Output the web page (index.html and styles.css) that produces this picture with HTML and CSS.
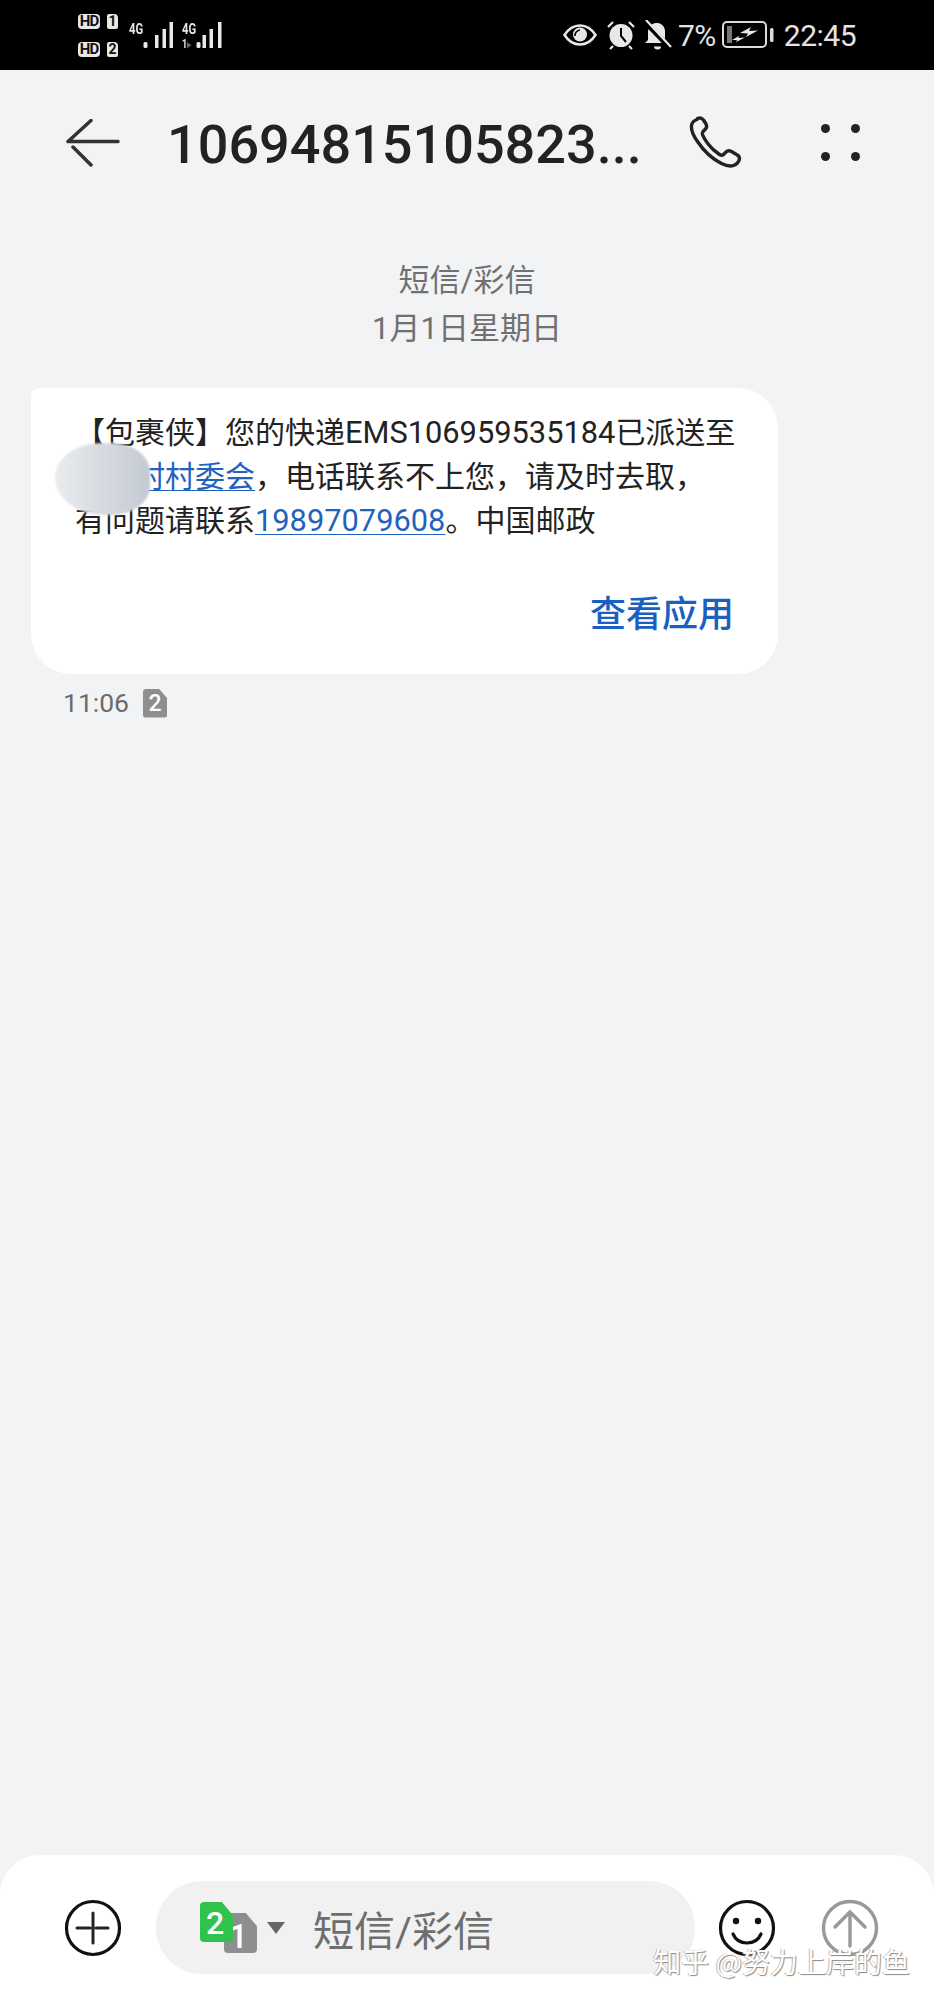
FILE: index.html
```html
<!DOCTYPE html>
<html lang="zh-CN">
<head>
<meta charset="utf-8">
<title>短信</title>
<link rel="stylesheet" href="styles.css">
</head>
<body>
<div class="phone">
  <header class="status">
    <div class="status-left">
      <div class="sims">
        <div class="sim-row"><span class="hd">HD</span><span class="sim-chip">1</span></div>
        <div class="sim-row"><span class="hd">HD</span><span class="sim-chip">2</span></div>
      </div>
      <div class="net">
        <span class="net-label">4G</span>
        <svg class="bars" width="30" height="26" viewBox="0 0 30 26"><g fill="#e8e8e8"><rect x="0.5" y="20" width="4" height="6" rx="1.500"/><rect x="12" y="13" width="3.500" height="13"/><rect x="19.500" y="7" width="3.500" height="19"/><rect x="26.500" y="0" width="3.500" height="26"/></g></svg>
      </div>
      <div class="net">
        <span class="net-label">4G<small class="net-sub">1<i class="net-arrow">▸</i></small></span>
        <svg class="bars" width="30" height="26" viewBox="0 0 30 26"><g fill="#e8e8e8"><rect x="0.5" y="20" width="4" height="6" rx="1.500"/><rect x="6.500" y="13" width="3.500" height="13"/><rect x="13.500" y="7" width="3.500" height="19"/><rect x="22" y="0" width="3.500" height="26"/></g></svg>
      </div>
    </div>
    <div class="status-right">
      <svg class="eye" width="34" height="24" viewBox="0 0 34 24"><path d="M1.500 12C6 5 11 2.500 17 2.500S28 5 32.500 12C28 19 23 21.500 17 21.500S6 19 1.500 12Z" fill="none" stroke="#e8e8e8" stroke-width="2.600"/><circle cx="17" cy="11.500" r="7" fill="#e8e8e8"/><path d="M12 13a5.500 5.500 0 0 1 5-6" fill="none" stroke="#000" stroke-width="1.600"/></svg>
      <svg class="alarm" width="30" height="30" viewBox="0 0 30 30"><circle cx="15" cy="15.500" r="11.500" fill="#e8e8e8"/><path d="M15 8v8l5 6" fill="none" stroke="#000" stroke-width="2"/><path d="M2 7l5-5M28 7l-5-5M7 26l-3 3M23 26l3 3" stroke="#e8e8e8" stroke-width="2.200"/></svg>
      <svg class="bell" width="28" height="30" viewBox="0 0 28 30"><path d="M1 23l3-3V12c0-5 4-9 8-9h2c5 1 7 5 7 8v12z" fill="#e8e8e8"/><path d="M0 1l26 27" stroke="#000" stroke-width="5"/><path d="M2 0l25 27" stroke="#e8e8e8" stroke-width="2.200"/><path d="M10 26.500h7a3.500 3 0 0 1-7 0z" fill="#e8e8e8"/></svg>
      <span class="pct">7%</span>
      <svg class="battery" width="52" height="28" viewBox="0 0 52 28"><rect x="1" y="1" width="43" height="25" rx="4" fill="none" stroke="#dcdcdc" stroke-width="2"/><rect x="5" y="5" width="5" height="17" fill="#777"/><path d="M18 12L29 6L27 10L36 9.500L24 16L26 12.500Z" fill="#e8e8e8"/><path d="M10 19L17 15L16.500 17L23 16.500L14 21L15 19Z" fill="#e8e8e8"/><rect x="48" y="7" width="3.500" height="14" rx="1.500" fill="#dcdcdc"/></svg>
      <span class="clock">22:45</span>
    </div>
  </header>

  <nav class="topbar">
    <svg class="back" width="54" height="48" viewBox="0 0 54 48"><path d="M2 22.500H52M25 1.500L2 22.500M25 46L7 28" fill="none" stroke="#333" stroke-width="3.500" stroke-linecap="round"/></svg>
    <h1 class="title">10694815105823...</h1>
    <svg class="call" width="54" height="54" viewBox="0 0 54 54"><path d="M8 3.500c-3 1-5 3-5.500 6-.5 4 1 9 6 16 6 9 14 17 24 22 5 2.500 9 3 12 2 3-1 6-4 6-7 0-2-1-3-3-4l-5-3c-2-1-4-1-5.500.5l-2.500 2.500c-1 1-2.500 1-4 0-3-2-8-6-11-10-3-4-5-7-6-10-.4-1.500 0-2.500 1-3.500l2-2c1.500-1.500 1.500-3 .5-5l-2.500-4c-1.500-2-4-2.500-6-1.500z" fill="none" stroke="#222" stroke-width="3.400" stroke-linejoin="round"/></svg>
    <div class="dots"><i></i><i></i><i></i><i></i></div>
  </nav>

  <main class="thread">
    <div class="date-head">
      <div>短信/彩信</div>
      <div>1月1日星期日</div>
    </div>
    <article class="bubble">
      <p class="msg">【包裹侠】您的快递<span class="latin">EMS106959535184</span>已派送至<br><span class="indent"></span><a>村村委会</a>，电话联系不上您，请及时去取，<br>有问题请联系<a class="latin">19897079608</a>。中国邮政</p>
      <div class="action">查看应用</div>
      <span class="smudge"></span>
    </article>
    <div class="meta">
      <span>11:06</span>
      <span class="chip chip-small">2</span>
    </div>
  </main>

  <footer class="composer">
    <svg class="ico" width="58" height="58" viewBox="0 0 58 58"><circle cx="29" cy="29" r="26.500" fill="none" stroke="#111" stroke-width="3.200"/><path d="M13 29H26M32 29H44M29 14V44" stroke="#222" stroke-width="3" stroke-linecap="round"/></svg>
    <div class="field">
      <div class="sim-pick">
        <span class="chip chip-gray">1</span>
        <span class="chip chip-green">2</span>
      </div>
      <svg class="caret" width="20" height="14" viewBox="0 0 20 14"><path d="M1 1h18L10 13z" fill="#666"/></svg>
      <span class="placeholder">短信/彩信</span>
    </div>
    <svg class="ico smile" width="58" height="58" viewBox="0 0 58 58"><circle cx="29" cy="29" r="26.500" fill="none" stroke="#111" stroke-width="3.200"/><circle cx="18" cy="22" r="3.200" fill="#111"/><circle cx="40" cy="22" r="3.200" fill="#111"/><path d="M15 35c3 7 9 9 14 9s11-2 14-9" fill="none" stroke="#111" stroke-width="3.200" stroke-linecap="round"/></svg>
    <svg class="ico send" width="58" height="58" viewBox="0 0 58 58"><circle cx="29" cy="29" r="26.500" fill="none" stroke="#999" stroke-width="3.400"/><path d="M29 47V13M14 28L29 13L44 28" fill="none" stroke="#999" stroke-width="3.400" stroke-linecap="round"/></svg>
  </footer>
  <div class="watermark">知乎 @努力上岸的鱼</div>
</div>
</body>
</html>
```
FILE: styles.css
```css
* { box-sizing: border-box; }
html, body { margin: 0; padding: 0; }
body { font-family: "Roboto", "Noto Sans CJK SC", sans-serif; background: #f1f3f5; }
.phone { position: relative; width: 934px; height: 2000px; display: flex; flex-direction: column; overflow: hidden; background: #f1f3f5; }

.status { flex: none; height: 70px; background: #000; color: #e8e8e8; display: flex; justify-content: space-between; align-items: center; padding: 0 78px; }
.status-left { display: flex; align-items: center; gap: 9px; }
.sims { display: flex; flex-direction: column; gap: 13px; margin-right: 2px; }
.sim-row { display: flex; gap: 7px; }
.hd { width: 22px; height: 15px; background: #e8e8e8; color: #111; border-radius: 4px; font: 700 15px/15px "Roboto", sans-serif; letter-spacing: -1px; text-align: center; }
.sim-chip { width: 11px; height: 15px; background: #e8e8e8; color: #111; border-radius: 2px 4px 2px 2px; font: 700 14px/15px "Roboto", sans-serif; text-align: center; }
.net { display: flex; height: 26px; }
.net-label { display: block; width: 14px; font: 700 15px/14px "Roboto", sans-serif; transform: scaleX(.75); transform-origin: left top; white-space: nowrap; }
.net-sub { display: block; margin-top: 3px; font-size: 12px; line-height: 10px; }
.net-arrow { font-style: normal; color: #666; font-size: 11px; }
.bars { display: block; }

.status-right { display: flex; align-items: center; }
.alarm { margin-left: 9px; }
.bell { margin-left: 8px; }
.pct { margin-left: 6px; font-size: 30px; letter-spacing: -.5px; color: #e4e4e4; }
.battery { margin-left: 6px; }
.clock { margin-left: 10px; font-size: 30px; letter-spacing: -.5px; color: #e4e4e4; }

.topbar { flex: none; height: 146px; display: flex; align-items: center; padding: 0 74px 0 66px; }
.back { flex: none; }
.title { flex: 1; margin: 4px 0 0 47px; font-size: 54px; font-weight: 500; color: #222; line-height: 1; white-space: nowrap; }
.call { flex: none; }
.dots { flex: none; width: 39px; height: 37px; margin: -2px 0 0 78px; display: grid; grid-template-columns: 9px 9px; justify-content: space-between; align-content: space-between; }
.dots i { width: 9px; height: 9px; background: #222; border-radius: 50%; }

.thread { flex: 1; padding: 0 31px; }
.date-head { margin-top: 41px; text-align: center; font-size: 31px; line-height: 48px; color: #707070; }
.bubble { position: relative; width: 747px; height: 286px; margin-top: 35px; padding: 23px 44px 0; background: #fff; border-radius: 8px 40px 40px 40px; }
.msg { margin: 0; font-size: 30px; line-height: 44px; color: #222; white-space: nowrap; }
.msg .latin { font-size: 30.800px; }
.msg a { color: #1f63bd; text-decoration: underline; text-underline-offset: 3px; text-decoration-thickness: 1px; }
.indent { display: inline-block; width: 60px; }
.action { margin-top: 48px; text-align: right; font-size: 36px; line-height: 48px; color: #1a5fc2; font-weight: 500; }
.smudge { position: absolute; left: 24px; top: 55px; width: 95px; height: 72px; border-radius: 48% 40% 40% 52%; background: linear-gradient(90deg, #e9ecef, #c4cad3); filter: blur(1px); }

.meta { display: flex; align-items: center; gap: 14px; margin-top: 12px; padding-left: 32px; font-size: 26.500px; line-height: 34px; color: #6b6b6b; }
.chip { display: inline-block; color: #fff; text-align: center; clip-path: polygon(0 0, 66% 0, 100% 33%, 100% 100%, 0 100%); }
.chip-small { width: 24px; height: 29px; background: #8e8e8e; border-radius: 3px; font-size: 23px; line-height: 29px; font-weight: 500; }

.composer { flex: none; height: 145px; display: flex; align-items: center; padding: 26px 0; padding-left: 64px; background: #fff; border-radius: 40px 40px 0 0; }
.ico { flex: none; }
.field { flex: none; width: 539px; height: 93px; margin-left: 34px; padding-left: 44px; border-radius: 46px; background: #f1f1f1; display: flex; align-items: center; }
.sim-pick { position: relative; width: 57px; height: 51px; flex: none; }
.chip-green { position: absolute; left: 0; top: 0; width: 33px; height: 40px; background: #2fc34e; border-radius: 4px; font-size: 32px; line-height: 42px; font-weight: 500; padding-right: 3px; }
.chip-gray { position: absolute; left: 24px; top: 11px; width: 33px; height: 40px; background: #8e8e8e; border-radius: 4px; font-size: 34px; line-height: 46px; font-weight: 500; padding-right: 4px; }
.caret { flex: none; margin-left: 9px; }
.placeholder { margin-left: 27px; font-size: 41px; color: #6e6e6e; white-space: nowrap; }
.smile { margin-left: 23px; }
.send { margin-left: 45px; }

.watermark { position: absolute; right: 24px; bottom: 22px; font-family: "Noto Sans CJK SC", sans-serif; font-size: 28px; line-height: 34px; color: #fff; text-shadow: 1px 1px 1px #8a8a8a, -1px 0 0 #bdbdbd; }
```
